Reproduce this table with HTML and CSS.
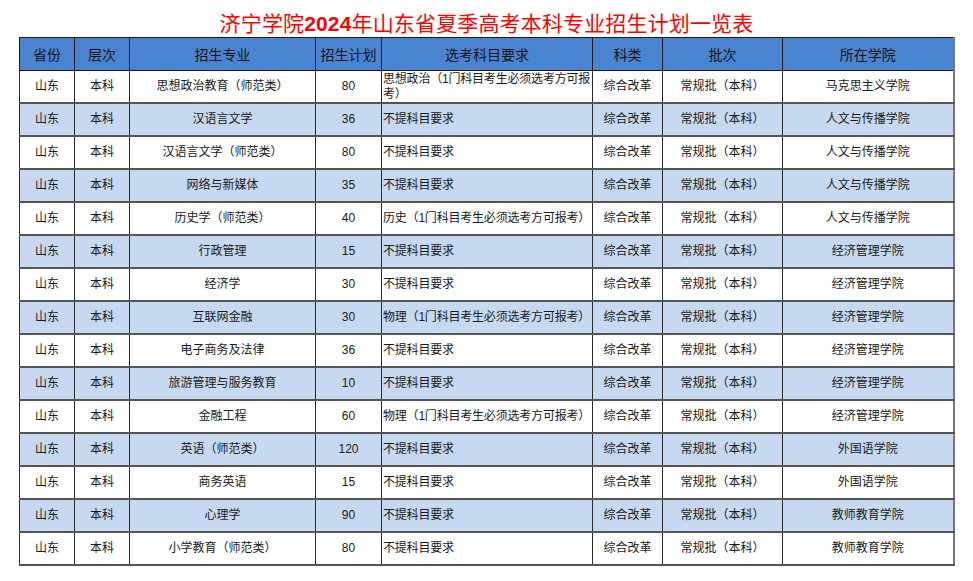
FILE: index.html
```html
<!DOCTYPE html>
<html lang="zh-CN">
<head>
<meta charset="utf-8">
<title>济宁学院2024年山东省夏季高考本科专业招生计划一览表</title>
<link rel="stylesheet" href="styles.css">
</head>
<body>
<h1 class="title">济宁学院<b class="year">2024</b>年山东省夏季高考本科专业招生计划一览表</h1>
<table class="plan">
  <colgroup>
    <col class="c-prov"><col class="c-level"><col class="c-major"><col class="c-num"><col class="c-req"><col class="c-type"><col class="c-batch"><col class="c-school">
  </colgroup>
  <thead>
    <tr><th>省份</th><th>层次</th><th>招生专业</th><th>招生计划</th><th>选考科目要求</th><th>科类</th><th>批次</th><th>所在学院</th></tr>
  </thead>
  <tbody>
    <tr><td>山东</td><td>本科</td><td>思想政治教育（师范类）</td><td class="num">80</td><td class="req">思想政治（1门科目考生必须选考方可报考）</td><td>综合改革</td><td>常规批（本科）</td><td>马克思主义学院</td></tr>
    <tr><td>山东</td><td>本科</td><td>汉语言文学</td><td class="num">36</td><td class="req">不提科目要求</td><td>综合改革</td><td>常规批（本科）</td><td>人文与传播学院</td></tr>
    <tr><td>山东</td><td>本科</td><td>汉语言文学（师范类）</td><td class="num">80</td><td class="req">不提科目要求</td><td>综合改革</td><td>常规批（本科）</td><td>人文与传播学院</td></tr>
    <tr><td>山东</td><td>本科</td><td>网络与新媒体</td><td class="num">35</td><td class="req">不提科目要求</td><td>综合改革</td><td>常规批（本科）</td><td>人文与传播学院</td></tr>
    <tr><td>山东</td><td>本科</td><td>历史学（师范类）</td><td class="num">40</td><td class="req">历史（1门科目考生必须选考方可报考）</td><td>综合改革</td><td>常规批（本科）</td><td>人文与传播学院</td></tr>
    <tr><td>山东</td><td>本科</td><td>行政管理</td><td class="num">15</td><td class="req">不提科目要求</td><td>综合改革</td><td>常规批（本科）</td><td>经济管理学院</td></tr>
    <tr><td>山东</td><td>本科</td><td>经济学</td><td class="num">30</td><td class="req">不提科目要求</td><td>综合改革</td><td>常规批（本科）</td><td>经济管理学院</td></tr>
    <tr><td>山东</td><td>本科</td><td>互联网金融</td><td class="num">30</td><td class="req">物理（1门科目考生必须选考方可报考）</td><td>综合改革</td><td>常规批（本科）</td><td>经济管理学院</td></tr>
    <tr><td>山东</td><td>本科</td><td>电子商务及法律</td><td class="num">36</td><td class="req">不提科目要求</td><td>综合改革</td><td>常规批（本科）</td><td>经济管理学院</td></tr>
    <tr><td>山东</td><td>本科</td><td>旅游管理与服务教育</td><td class="num">10</td><td class="req">不提科目要求</td><td>综合改革</td><td>常规批（本科）</td><td>经济管理学院</td></tr>
    <tr><td>山东</td><td>本科</td><td>金融工程</td><td class="num">60</td><td class="req">物理（1门科目考生必须选考方可报考）</td><td>综合改革</td><td>常规批（本科）</td><td>经济管理学院</td></tr>
    <tr><td>山东</td><td>本科</td><td>英语（师范类）</td><td class="num">120</td><td class="req">不提科目要求</td><td>综合改革</td><td>常规批（本科）</td><td>外国语学院</td></tr>
    <tr><td>山东</td><td>本科</td><td>商务英语</td><td class="num">15</td><td class="req">不提科目要求</td><td>综合改革</td><td>常规批（本科）</td><td>外国语学院</td></tr>
    <tr><td>山东</td><td>本科</td><td>心理学</td><td class="num">90</td><td class="req">不提科目要求</td><td>综合改革</td><td>常规批（本科）</td><td>教师教育学院</td></tr>
    <tr><td>山东</td><td>本科</td><td>小学教育（师范类）</td><td class="num">80</td><td class="req">不提科目要求</td><td>综合改革</td><td>常规批（本科）</td><td>教师教育学院</td></tr>
  </tbody>
</table>
</body>
</html>
```
FILE: styles.css
```css
html, body {
  margin: 0;
  padding: 0;
  background: #ffffff;
}

body {
  font-family: "Liberation Sans", "Noto Sans CJK SC", sans-serif;
  color: #1a1a1a;
}

.title {
  margin: 0;
  padding-top: 9px;
  height: 28px;
  line-height: 26px;
  text-align: center;
  font-family: "Noto Sans CJK SC", sans-serif;
  font-size: 21px;
  font-weight: 400;
  letter-spacing: 0.15px;
  color: #ff0000;
}

.year {
  font-family: "Liberation Sans", sans-serif;
  font-weight: 700;
  font-size: 21px;
}

.plan {
  margin-left: 19px;
  width: 934px;
  border-collapse: collapse;
  table-layout: fixed;
  font-size: 12px;
}

.c-prov { width: 55px; }
.c-level { width: 55px; }
.c-major { width: 186px; }
.c-num { width: 66px; }
.c-req { width: 211px; }
.c-type { width: 70px; }
.c-batch { width: 120px; }
.c-school { width: 171px; }

.plan th {
  height: 32px;
  padding: 0;
  background: #4a84d0;
  border: 1px solid #1a1a1a;
  font-family: "Noto Sans CJK SC", sans-serif;
  font-weight: 400;
  font-size: 14px;
  color: #141414;
  text-align: center;
  vertical-align: middle;
}

.plan td {
  height: 31px;
  padding: 0 2px;
  border-left: 1px solid #2a2a2a;
  border-right: 1px solid #2a2a2a;
  border-bottom: 2px solid #555555;
  text-align: center;
  vertical-align: middle;
  line-height: 15px;
  font-family: "Liberation Sans", "Noto Sans CJK SC", sans-serif;
}

.plan td:last-child,
.plan th:last-child {
  border-right: 2px solid #777777;
}

.plan tbody tr:nth-child(even) td {
  background: #c6d9f1;
}

.plan td.req {
  text-align: left;
  padding: 0 0 0 1px;
  letter-spacing: -0.2px;
}
```
